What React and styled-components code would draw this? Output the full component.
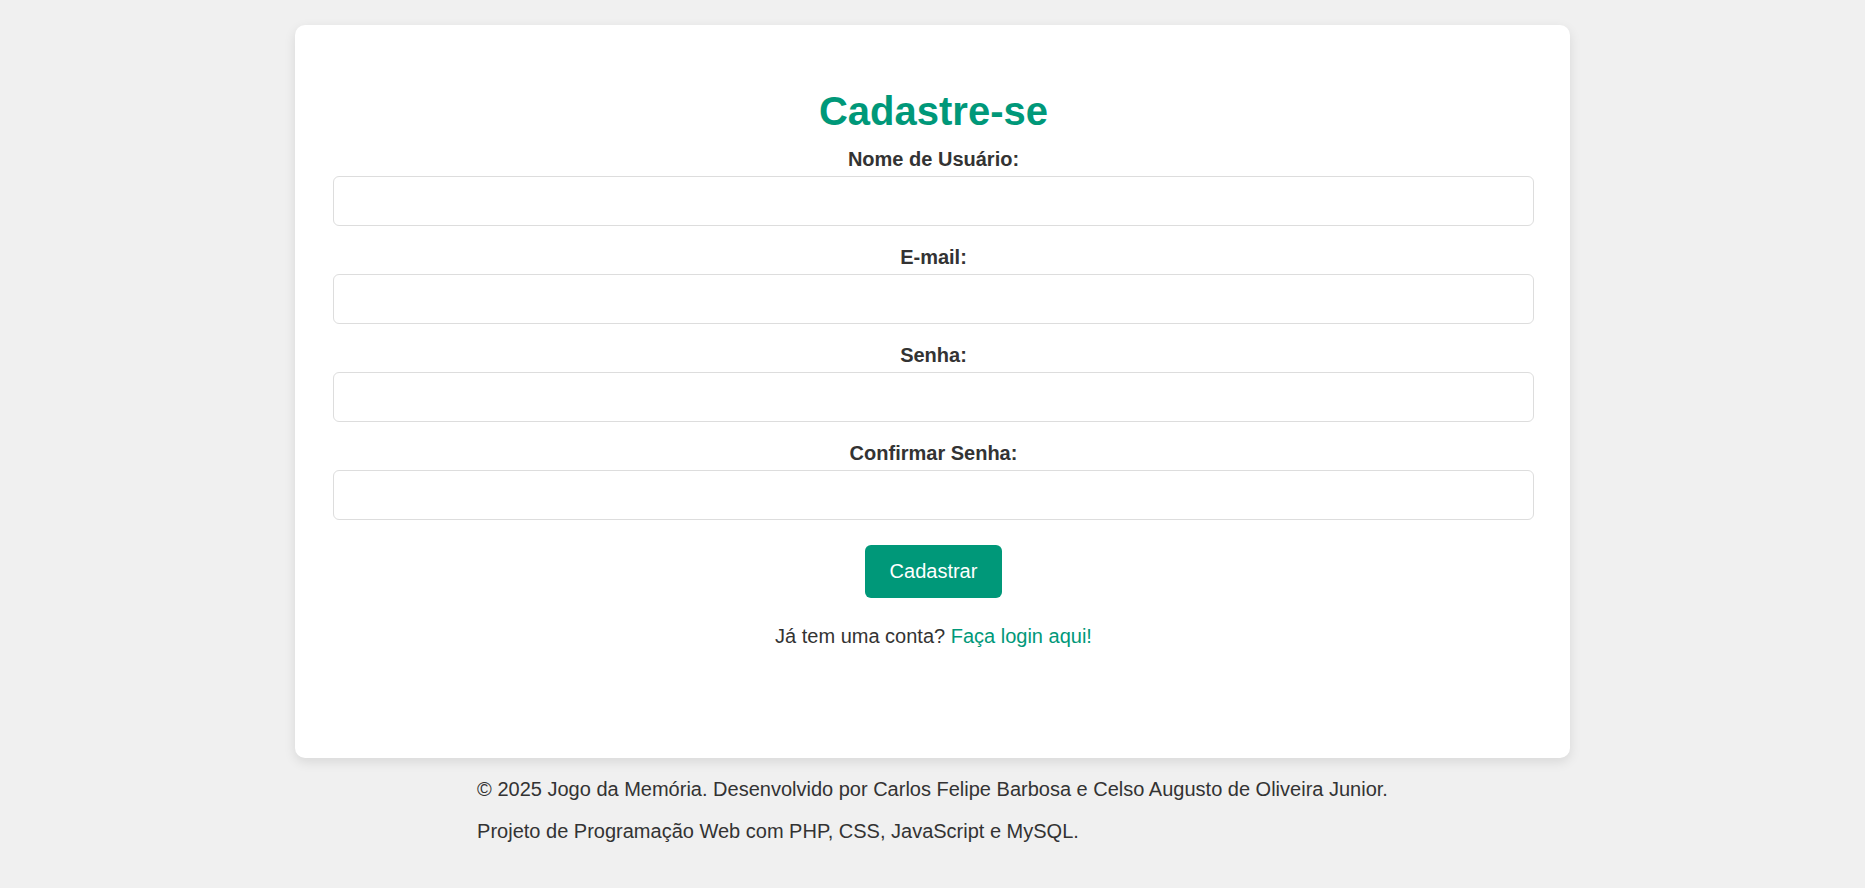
import styled, { createGlobalStyle } from "styled-components";

const GlobalStyle = createGlobalStyle`
  html, body {
    margin: 0;
    padding: 0;
    background: #f0f0f0;
    font-family: "Liberation Sans", Arial, sans-serif;
    font-size: 20px;
    color: #333;
  }
`;

const Page = styled.div`
  display: flex;
  flex-direction: column;
  align-items: center;
  padding-top: 25px;
`;

const Card = styled.div`
  width: 1275px;
  box-sizing: border-box;
  background: #fff;
  border-radius: 10px;
  box-shadow: 0 4px 12px rgba(0, 0, 0, 0.1);
  padding: 40px 36px 110px 38px;
  text-align: center;
`;

const Title = styled.h1`
  color: #009879;
  font-size: 40px;
  font-weight: bold;
  margin: 23px 0 14px;
  line-height: 46px;
`;

const Form = styled.form`
  display: flex;
  flex-direction: column;
  align-items: stretch;
`;

const Label = styled.label`
  font-weight: bold;
  font-size: 20px;
  line-height: 23px;
  margin-bottom: 5px;
  color: #333;
`;

const Input = styled.input`
  height: 50px;
  box-sizing: border-box;
  border: 1px solid #ddd;
  border-radius: 6px;
  padding: 0 12px;
  margin-bottom: 20px;
  font-size: 20px;
  font-family: inherit;
  outline: none;
`;

const Button = styled.button`
  align-self: center;
  margin-top: 5px;
  background: #009879;
  color: #fff;
  border: none;
  border-radius: 6px;
  padding: 0 25px;
  height: 53px;
  font-size: 20px;
  font-family: inherit;
  cursor: pointer;
`;

const Switch = styled.p`
  margin: 27px 0 0;
  line-height: 23px;
  font-size: 20px;

  & a {
    color: #009879;
    text-decoration: none;
  }
`;

const Footer = styled.footer`
  width: fit-content;
  margin-top: 20px;
  text-align: left;

  & p {
    margin: 0 0 19px;
    line-height: 23px;
    font-size: 20px;
    color: #333;
    white-space: nowrap;
  }
`;

export default function App() {
  return (
    <>
      <GlobalStyle />
      <Page>
        <Card>
          <Title>Cadastre-se</Title>
          <Form onSubmit={(e) => e.preventDefault()}>
            <Label htmlFor="usuario">Nome de Usuário:</Label>
            <Input id="usuario" type="text" />
            <Label htmlFor="email">E-mail:</Label>
            <Input id="email" type="email" />
            <Label htmlFor="senha">Senha:</Label>
            <Input id="senha" type="password" />
            <Label htmlFor="confirmar">Confirmar Senha:</Label>
            <Input id="confirmar" type="password" />
            <Button type="submit">Cadastrar</Button>
          </Form>
          <Switch>
            Já tem uma conta? <a href="#login">Faça login aqui!</a>
          </Switch>
        </Card>
        <Footer>
          <p>
            © 2025 Jogo da Memória. Desenvolvido por Carlos Felipe Barbosa e
            Celso Augusto de Oliveira Junior.
          </p>
          <p>Projeto de Programação Web com PHP, CSS, JavaScript e MySQL.</p>
        </Footer>
      </Page>
    </>
  );
}
